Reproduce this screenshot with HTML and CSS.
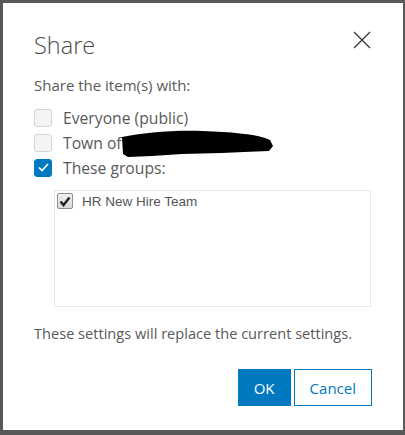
FILE: index.html
```html
<!DOCTYPE html>
<html lang="en">
<head>
  <meta charset="UTF-8" />
  <title>Share</title>
  <link rel="stylesheet" href="styles.css">
</head>
<body>
  <div class="dialog">
    <header>
      <h1>Share</h1>
      <button class="close" aria-label="Close">
        <svg width="18" height="18" viewBox="0 0 18 18"><path d="M1 1 L17 17 M17 1 L1 17" stroke="#333" stroke-width="1.2" fill="none"/></svg>
      </button>
    </header>

    <p class="intro">Share the item(s) with:</p>

    <ul class="options">
      <li><span class="box"></span>Everyone (public)</li>
      <li><span class="box"></span>Town of<svg class="redact" width="152" height="28" viewBox="0 0 152 28"><path d="M0 7 C20 3 50 0 80 1 C110 2 130 4 143 8 L148 10 L151 16 L147 21 L122 22 L100 23 L60 24 L30 26 L6 27 L1 24 Z" fill="#000"/></svg></li>
      <li><span class="box checked"><svg width="11" height="9" viewBox="0 0 11 9"><path d="M1 4.5 L4 7.5 L10 1" stroke="#fff" stroke-width="1.6" fill="none"/></svg></span>These groups:</li>
    </ul>

    <div class="groups">
      <div class="group">
        <span class="legacy-box"><svg width="12" height="11" viewBox="0 0 12 11"><path d="M1.5 5.5 L4.5 9 L10.5 1.5" stroke="#222" stroke-width="2.4" fill="none"/></svg></span>
        HR New Hire Team
      </div>
    </div>

    <p class="note">These settings will replace the current settings.</p>

    <div class="actions">
      <button class="btn primary">OK</button>
      <button class="btn">Cancel</button>
    </div>
  </div>
</body>
</html>
```

FILE: styles.css
```css
body, html {
  margin: 0;
  padding: 0;
  height: 100%;
  background: #595959;
  font-family: "Open Sans", Lato, sans-serif;
  color: #595959;
}

.dialog {
  margin: 3px 2px 0 3px;
  height: 427px;
  box-sizing: border-box;
  background: #fff;
  padding: 26px 31px 0 31px;
}

/* Header */
header {
  display: flex;
  justify-content: space-between;
  align-items: flex-start;
}

h1 {
  margin: 0;
  font-size: 23.5px;
  font-weight: 300;
  line-height: 32px;
  color: #4c4c4c;
}

.close {
  background: none;
  border: none;
  padding: 0;
  margin: 2px 1px 0 0;
  width: 18px;
  height: 18px;
  cursor: pointer;
}

.intro {
  margin: 14px 0 0;
  font-size: 15px;
  line-height: 20px;
}

.options {
  list-style: none;
  margin: 10px 0 0;
  padding: 0;
}

.options li {
  display: flex;
  align-items: center;
  height: 25px;
  font-size: 15.7px;
}

.box {
  width: 16px;
  height: 16px;
  border: 1px solid #d4d4d4;
  background: #f4f4f4;
  border-radius: 3px;
  margin-right: 11px;
  display: flex;
  justify-content: center;
  align-items: center;
}

.box.checked {
  background: #0079c1;
  border-color: #0079c1;
}

.redact {
  margin-left: 0;
  margin-top: 2px;
}

/* Groups list */
.groups {
  margin: 10px 1px 0 20px;
  height: 117px;
  box-sizing: border-box;
  border: 1px solid #e6e6e6;
  padding: 2px;
}

.group {
  display: flex;
  align-items: center;
  font-family: "Liberation Sans", Arial, sans-serif;
  font-size: 13.5px;
  color: #555;
}

.legacy-box {
  width: 14px;
  height: 14px;
  border: 1px solid #8f8f8f;
  border-radius: 2px;
  background: linear-gradient(180deg, #f0f0f0, #d8d8d8);
  margin-right: 9px;
  display: flex;
  justify-content: center;
  align-items: center;
}

.note {
  margin: 16px 0 0;
  font-size: 14.6px;
  line-height: 20px;
}

.actions {
  display: flex;
  justify-content: flex-end;
  gap: 3px;
  margin-top: 26px;
}

.btn {
  height: 37px;
  padding: 0 15px;
  font-family: "Open Sans", Lato, sans-serif;
  font-size: 15px;
  background: #fff;
  color: #0079c1;
  border: 1px solid #0079c1;
  cursor: pointer;
}

.btn.primary {
  background: #0079c1;
  color: #fff;
  width: 53px;
}
```
